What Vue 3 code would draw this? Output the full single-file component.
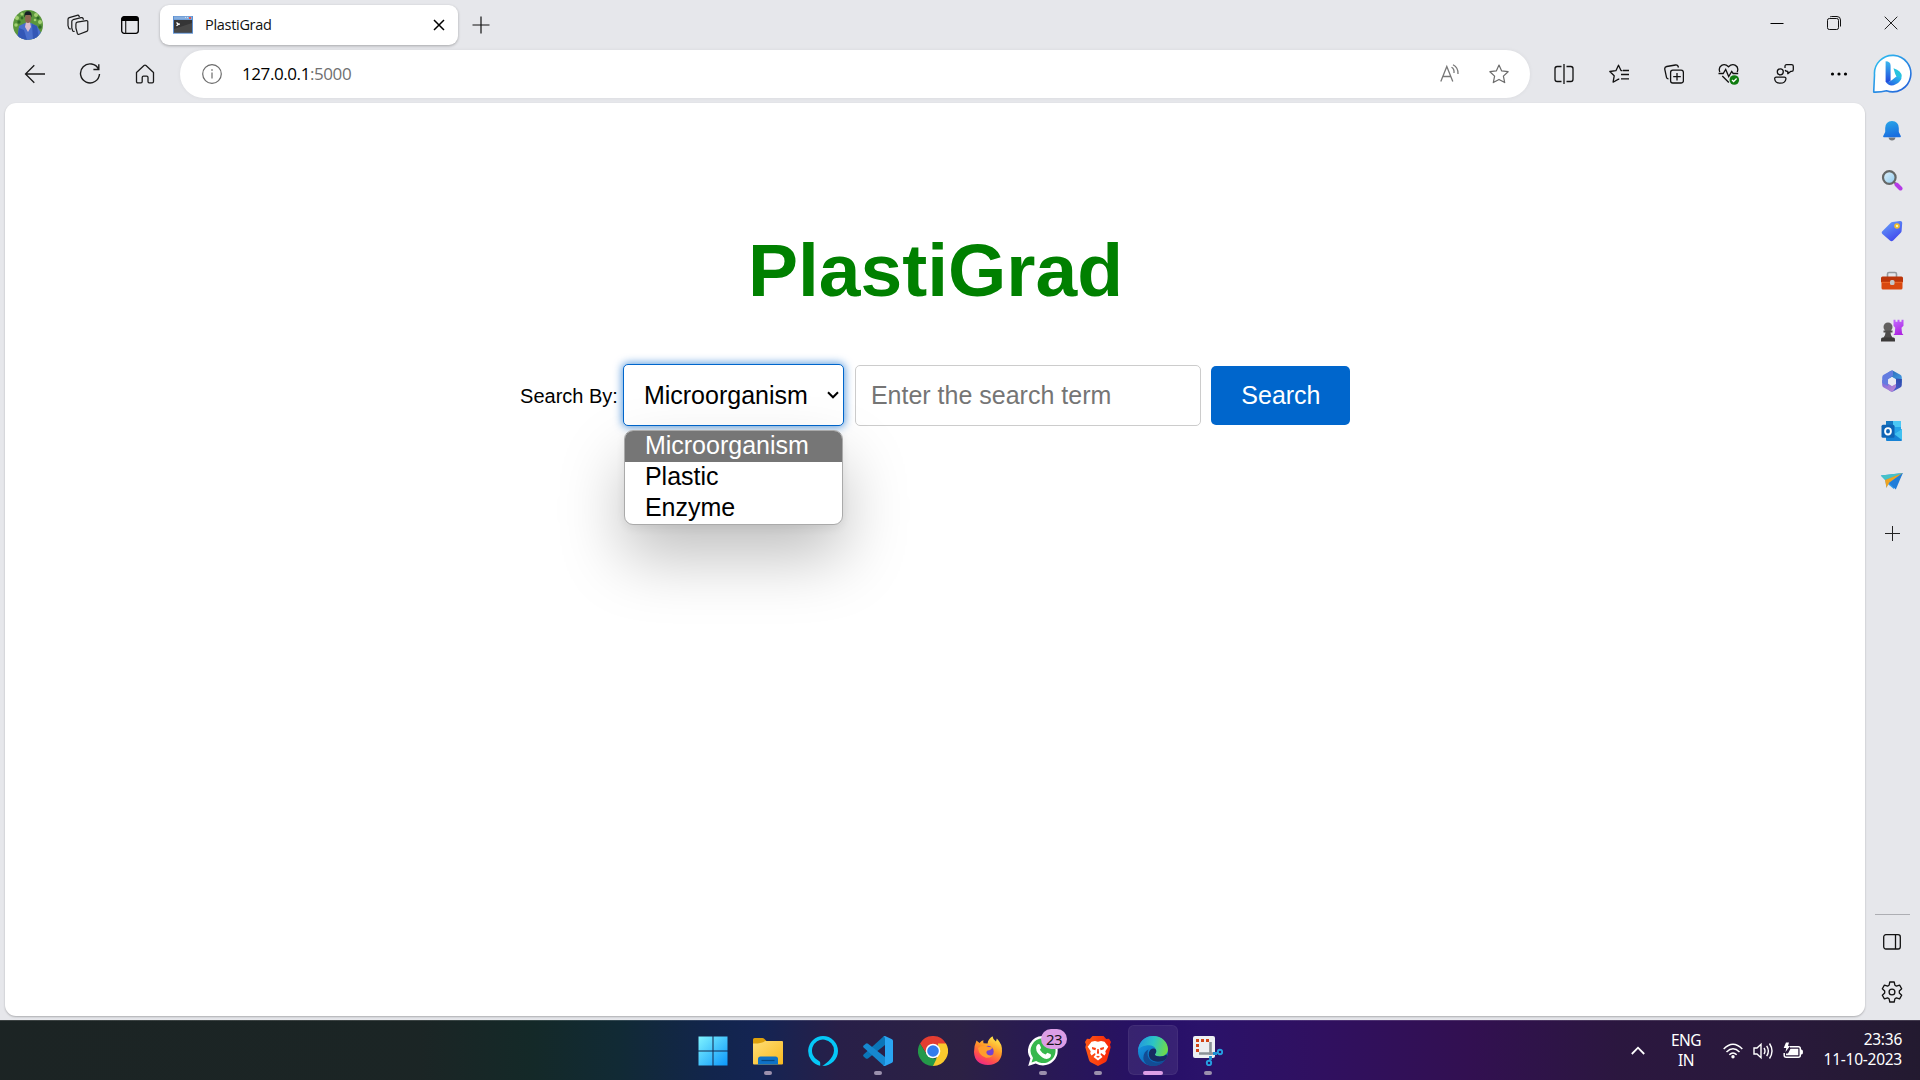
<script setup>
import { ref } from 'vue'

const options = ['Microorganism', 'Plastic', 'Enzyme']
const selected = ref('Microorganism')
const term = ref('')
</script>

<template>
  <div class="desktop">
    <div class="browser">
      <header class="titlebar">
        <svg class="avatar" width="30" height="30" viewBox="0 0 30 30">
          <defs><clipPath id="avatarClip"><circle cx="15" cy="15" r="15" /></clipPath></defs>
          <g clip-path="url(#avatarClip)">
            <rect width="30" height="30" fill="#5a963c" />
            <g fill="#a3d072"><circle cx="4" cy="8" r="2" /><circle cx="9" cy="4" r="1.6" /><circle cx="23" cy="5" r="2" /><circle cx="27" cy="12" r="2" /><circle cx="3" cy="15" r="1.8" /><circle cx="22" cy="10" r="1.3" /></g>
            <g fill="#2f6a26"><circle cx="6" cy="12" r="1.700" /><circle cx="25" cy="8" r="1.5" /><circle cx="9" cy="8" r="1.4" /><circle cx="27" cy="17" r="1.700" /></g>
            <path d="M4 30 6 16l6-3h6l6 3 4 7v7z" fill="#4a70cc" />
            <path d="M6 18l5 2 3 10H4zM19 14l5 2 2 14h-6z" fill="#3357b6" />
            <path d="M13 12h4l1 5-3 5-3-5z" fill="#dcbccd" />
            <ellipse cx="15" cy="8.5" rx="3" ry="4.600" fill="#8d6552" />
            <path d="M11.500 7.500C11 3 12.500 1.300 15 1.300s4.200 1.700 3.500 6.200l-1-2.500h-5z" fill="#171e24" />
          </g>
        </svg>
        <svg class="workspaces" width="22" height="22" viewBox="0 0 22 22" fill="none" stroke="#1b1b1b" stroke-width="1.2" stroke-linejoin="round">
          <path d="M10.300 8.200 19.400 6.700q1.400-.2 1.400 1.100v8q0 1.300-1.100 1.600l-7.500 2.800q-1.400.5-1.800-.7L8.900 14V10q0-1.500 1.400-1.800z" />
          <path d="M7.600 17.400q-1.700.4-2-.8L4.800 14V7.400q0-1.300 1.300-1.700l8-2q1.600-.4 2 .8l.4 1.300" />
          <path d="M3.800 14.900q-1.700.3-2-.8L1 11.600V5.300q0-1.300 1.300-1.700l7.800-2.300q1.600-.4 2 .9l.3 1" />
        </svg>
        <svg class="tab-actions" width="18" height="18" viewBox="0 0 18 18">
          <rect x=".7" y=".7" width="16.600" height="16.600" rx="2.500" fill="none" stroke="#000" stroke-width="1.300" />
          <path d="M.5 5V3Q.5.5 3 .5h12Q17.500.5 17.500 3v2z" />
          <path d="M4.700 5v12.500" stroke="#222" stroke-width="1.200" />
        </svg>
        <div class="tab">
          <svg width="20" height="18" viewBox="0 0 20 18">
            <rect width="20" height="17.700" fill="#5d90d2" /><rect x="1" y=".5" width="18" height="3" fill="#86aede" />
            <path d="M16 1h2v2h-2z" fill="#e0574b" /><path d="M12 1.400h1M14 1.400h1" stroke="#d5e4f6" />
            <rect x="1" y="4" width="18" height="12.500" fill="#353536" /><path d="M1 16.500V13L19 7v9.500z" fill="#484848" />
            <path d="m3.500 6.500 2 1.700-2 1.600M5.700 8.200h1.300" fill="none" stroke="#fff" stroke-width="1.300" />
          </svg>
          <span class="tab-title">PlastiGrad</span>
          <svg width="12" height="12" viewBox="0 0 12 12" stroke="#000" stroke-width="1.500"><path d="m1 1 10 10M11 1 1 11" /></svg>
        </div>
        <svg class="new-tab" width="18" height="18" viewBox="0 0 18 18" stroke="#111" stroke-width="1.200"><path d="M9 .5v17M.5 9h17" /></svg>
        <div class="window-controls">
          <span><svg width="14" height="14" viewBox="0 0 14 14"><path d="M.5 7.500h13" stroke="#000" /></svg></span>
          <span><svg width="14" height="14" viewBox="0 0 14 14" fill="none" stroke="#111"><rect x=".5" y="2.500" width="11" height="11" rx="1.800" /><path d="M3 1Q3.500.5 4.500.5H10Q13.500.5 13.500 4v6.500" /></svg></span>
          <span><svg width="14" height="14" viewBox="0 0 14 14" stroke="#222"><path d="m.7.700 12.600 12.600M13.300.7.700 13.300" /></svg></span>
        </div>
      </header>

      <nav class="toolbar">
        <span class="tool"><svg width="22" height="20" viewBox="0 0 22 20" fill="none" stroke="#1b1b1b" stroke-width="1.300"><path d="M10.300 1.200 1.500 10l8.800 8.800M1.500 10H21" /></svg></span>
        <span class="tool"><svg width="22" height="22" viewBox="0 0 22 22" fill="none" stroke="#1b1b1b" stroke-width="1.400"><path d="M19.600 6.300A9.500 9.500 0 1 0 20.500 11M19.800 1.200v5.300h-5.400" /></svg></span>
        <span class="tool"><svg width="20" height="20" viewBox="0 0 20 20" fill="none" stroke="#1b1b1b" stroke-width="1.300" stroke-linejoin="round"><path d="M1.500 8.500 9 1.600q1-.9 2 0l7.500 6.900v9q0 1.300-1.300 1.300h-3q-1.200 0-1.200-1.300v-4q0-1.300-1.300-1.300H8.500q-1.300 0-1.300 1.300v4q0 1.300-1.200 1.300H2.800q-1.300 0-1.300-1.300z" /></svg></span>
        <div class="address">
          <svg width="20" height="20" viewBox="0 0 20 20" fill="none" stroke="#6b6b6b" stroke-width="1.200"><circle cx="10" cy="10" r="9.300" /><path d="M10 8.500v6" /><path d="M10 5.200v1.500" stroke-width="1.400" /></svg>
          <span class="url">127.0.0.1<span>:5000</span></span>
          <svg class="read" width="20" height="20" viewBox="0 0 20 20" fill="none" stroke="#777" stroke-width="1.300"><path d="M.8 17.500 6.800 2.500l6 15M3 12.500h7.700M11.500 3.300q3 1.700 2.500 5.700M13 .8q5.500 3 5 9.200" /></svg>
          <svg class="fav" width="20" height="20" viewBox="0 0 20 20" fill="none" stroke="#6b6b6b" stroke-width="1.200" stroke-linejoin="round"><path d="m10 1 2.700 5.900 6.400.8-4.700 4.400 1.300 6.500L10 15.400l-5.700 3.200 1.300-6.500L.9 7.700l6.400-.8z" /></svg>
        </div>
        <span class="tool"><svg width="20" height="20" viewBox="0 0 20 20" fill="none" stroke="#111" stroke-width="1.300"><path d="M7.500 2.500H3.200Q1 2.500 1 4.700v10.600q0 2.200 2.200 2.200h4.300M12.500 2.500h4.300Q19 2.500 19 4.700v10.600q0 2.200-2.200 2.200h-4.300M10 0v20" /></svg></span>
        <span class="tool"><svg width="20" height="20" viewBox="0 0 20 20" fill="none" stroke="#111" stroke-width="1.300" stroke-linejoin="round"><path d="m13.500 6.700-1.500-.2L9.500 1.200 6.900 6.700.8 7.500l4.400 4.300-1.100 6.400 5.400-3.100.8.300M14 6.500h6M12 10.500h8M12 14.800h8" /></svg></span>
        <span class="tool"><svg width="20" height="20" viewBox="0 0 20 20" fill="none" stroke="#111" stroke-width="1.300"><rect x="6.600" y="6.200" width="12.800" height="12.800" rx="2.200" /><path d="M13 9v7.500M9.200 12.700h7.600M14.500 3.500q-.6-2.800-3-2.500l-8.800 1.500Q.4 3 .8 5.300l1.700 8q.4 1.500 2 1.500" /></svg></span>
        <span class="tool"><svg width="22" height="22" viewBox="0 0 22 22" fill="none" stroke="#111" stroke-width="1.300"><path d="M1.800 9C-.4 2.700 6-.7 10.500 3.800 15-.7 21.600 2.700 19.200 9M.5 10.500h4.700l2.500-4 3 7 3-5 1.500 2h5M4.300 13l6.500 6.500" /><circle cx="16.300" cy="17" r="4.800" fill="#107c10" stroke="none" /><path d="m14 17 1.600 1.500 3-3" stroke="#fff" /></svg></span>
        <span class="tool"><svg width="20" height="20" viewBox="0 0 20 20" fill="none" stroke="#111" stroke-width="1.300" stroke-linejoin="round"><circle cx="6.300" cy="7.800" r="3" /><path d="M2.300 13.200h8q1.800 0 1.600 1.800-.5 4.200-5.600 4.200T.7 15q-.2-1.800 1.600-1.800zM11 4V2.300Q11 .7 12.600.7h5Q19.300.7 19.300 2.300v3.500q0 1.600-1.700 1.600h-1l-2.800 2.300V7.400q-2.300 0-2.600-1.400" /></svg></span>
        <span class="tool"><svg width="18" height="4" viewBox="0 0 18 4"><circle cx="2.500" cy="2" r="1.600" /><circle cx="9" cy="2" r="1.600" /><circle cx="15.500" cy="2" r="1.600" /></svg></span>
        <svg class="bing" width="40" height="40" viewBox="0 0 40 40">
          <defs>
            <linearGradient id="ring" x1="0" y1="0" x2="1" y2="1"><stop stop-color="#2ec5f2" /><stop offset="1" stop-color="#255bd8" /></linearGradient>
            <linearGradient id="bStem" x1="0" y1="0" x2="0" y2="1"><stop stop-color="#3ab9ef" /><stop offset="1" stop-color="#2149dc" /></linearGradient>
            <linearGradient id="bBowl" x1="0" y1="1" x2="1" y2="0"><stop stop-color="#2351e2" /><stop offset="1" stop-color="#2cc8ee" /></linearGradient>
          </defs>
          <path d="M1.700 38.100 2.500 21A18.200 18.200 0 1 1 14.500 36.700Q9 38.300 1.700 38.100z" fill="#fff" stroke="url(#ring)" stroke-width="1.600" stroke-linejoin="round" />
          <path d="M21.500 14.200q8 2.500 8.300 8-1.500 3-3.500 1.500-2.400-1-3.200-4z" fill="#28c3de" />
          <path d="M13.500 27.500q4 1 6.500-1.500l5-4q3 0 4.700 1.500-.8 4.200-6 6.800-6 3.500-10.200-2.800z" fill="url(#bBowl)" />
          <path d="M13.600 7.200q5 0 5 4.500v14.500q-2 3-5 1.500z" fill="url(#bStem)" />
        </svg>
      </nav>

      <div class="body">
        <main class="page">
          <h1>PlastiGrad</h1>
          <form class="search" @submit.prevent>
            <label>Search By:</label>
            <div class="select">
              <span>{{ selected }}</span>
              <svg width="12" height="8" viewBox="0 0 12 8" fill="none" stroke="#000" stroke-width="2"><path d="m1 1.300 5 5 5-5" /></svg>
              <ul class="menu">
                <li v-for="o in options" :key="o" :class="{ active: o === selected }" @click="selected = o">{{ o }}</li>
              </ul>
            </div>
            <input v-model="term" type="text" placeholder="Enter the search term" />
            <button type="submit">Search</button>
          </form>
        </main>

        <aside class="sidebar">
          <span class="side"><svg width="20" height="22" viewBox="0 0 20 22">
            <defs><linearGradient id="bell" x2=".3" y2="1"><stop stop-color="#2aa9e8" /><stop offset="1" stop-color="#1a6fe0" /></linearGradient></defs>
            <path d="M6.500 17.500h7q-.5 3-3.500 3t-3.500-3z" fill="#77787c" /><path d="M10 1q6.600.3 6.800 7v4l2 4q.4 1.200-.8 1.200H2q-1.200 0-.8-1.200l2-4V8Q3.400 1.300 10 1z" fill="url(#bell)" /></svg></span>
          <span class="side"><svg width="22" height="22" viewBox="0 0 22 22">
            <defs><linearGradient id="lens" x2="1" y2="1"><stop stop-color="#e2f3fb" /><stop offset="1" stop-color="#8cc9ee" /></linearGradient></defs>
            <path d="m13 12 3 3" stroke="#777" stroke-width="2" /><path d="m15.500 14.500 4 4" stroke="#b53be6" stroke-width="4" stroke-linecap="round" /><circle cx="8.300" cy="7.500" r="6.300" fill="url(#lens)" stroke="#656867" stroke-width="2.200" /></svg></span>
          <span class="side"><svg width="22" height="22" viewBox="0 0 22 22">
            <defs><linearGradient id="tag" x1="0" y1="0" x2=".6" y2="1"><stop stop-color="#69a6fa" /><stop offset="1" stop-color="#4149ed" /></linearGradient></defs>
            <path d="M11.500 2 19 .9q2.300-.2 2.200 2L20.600 11q-.1 1-.8 1.700l-7.600 7.700q-1.700 1.500-3.300 0L1.400 14q-1.500-1.500.2-3l8.200-8.200q.7-.7 1.700-.8z" fill="url(#tag)" /><circle cx="16" cy="6" r="2" fill="#fff6b0" stroke="#f3bd25" stroke-width="1.600" /></svg></span>
          <span class="side"><svg width="24" height="20" viewBox="0 0 24 20">
            <path d="M7.500 6V3Q7.500 1.500 9 1.500h6q1.500 0 1.500 1.500v3" fill="none" stroke="#95999d" stroke-width="1.600" /><rect x="1.500" y="9" width="21" height="9.500" rx="1.500" fill="#d9480f" /><path d="M2.500 5.500h19q1.500 0 1.500 1.500v4H1V7q0-1.500 1.500-1.500z" fill="#bb3509" /><path d="M1.500 11.300h21" stroke="#ef6b2a" /><rect x="10" y="9" width="4.500" height="5" rx="1.500" fill="#c4c8ca" /></svg></span>
          <span class="side"><svg width="24" height="24" viewBox="0 0 24 24">
            <defs><linearGradient id="rook" x2=".3" y2="1"><stop stop-color="#c36cff" /><stop offset="1" stop-color="#ae27e2" /></linearGradient></defs>
            <path d="M13.500.8h2v2h2v-2h2v2h2v-2h2v6l-2 2 .5 5.500 1.500 1.700h-10l1.300-1.700.4-5.500-1.700-2z" fill="url(#rook)" /><circle cx="8" cy="8" r="4.500" fill="#62605f" /><path d="M3.500 11.500h9v2h-2q0 3 2.200 5.500H3.300q2.200-2.500 2.200-5.500h-2z" fill="#4e4c4b" /><path d="M2.500 18.500h11q1.500 0 1.500 2v2H1v-2q0-2 1.500-2z" fill="#3b3938" /></svg></span>
          <span class="side"><svg width="22" height="22" viewBox="0 0 22 22">
            <defs>
              <linearGradient id="mA" x2="1" y2="1"><stop stop-color="#2460ae" /><stop offset="1" stop-color="#49a5ec" /></linearGradient>
              <linearGradient id="mB" x1="1" y1="0" x2="0" y2="1"><stop stop-color="#2949a8" /><stop offset="1" stop-color="#5865dc" /></linearGradient>
              <linearGradient id="mC" x2="1" y2="1"><stop stop-color="#7466dc" /><stop offset="1" stop-color="#c38ad4" /></linearGradient>
            </defs>
            <path d="M9.500.9q1.500-.8 3 0l6.800 3.900q1.500.9 1.500 2.600V13L15 9.500 11 7l-4 2.500L5.500 12V4z" fill="url(#mA)" />
            <path d="M20.800 9v6q0 1.700-1.500 2.600l-6.800 3.700q-1.500.8-3 0L7 19.500l8-5v-6z" fill="url(#mB)" />
            <path d="M1.200 10v5q0 1.700 1.500 2.600l6.800 3.700q1.500.8 2.700-.3L15 17v-3l-4 2-4-2.500V11z" fill="url(#mC)" />
            <path d="M9.500.9 2.700 4.800Q1.200 5.700 1.200 7.400V13L7 16V9.500L12 5.500V.6z" fill="#637ce0" />
            <path d="m11 7 3.800 2.200v4.300L11 15.700l-3.800-2.200V9.200z" fill="#e9eaf3" /></svg></span>
          <span class="side"><svg width="22" height="22" viewBox="0 0 22 22">
            <rect x="5" y="1" width="15" height="14" rx="1" fill="#27a4e8" /><path d="M5 1h7v7H5z" fill="#1678c2" /><path d="M12 1h8v6h-8z" fill="#4cc8f5" /><path d="M5 20V9l8 5 8-5v11q0 1-1 1H6q-1 0-1-1z" fill="#1682d5" /><path d="m21 9-8 5 8 6z" fill="#40c0f0" /><rect x=".5" y="4.800" width="13" height="13" rx="1.500" fill="#0f64b5" /><ellipse cx="7" cy="11.300" rx="2.900" ry="3.200" fill="none" stroke="#fff" stroke-width="1.900" /></svg></span>
          <span class="side"><svg width="24" height="20" viewBox="0 0 24 20">
            <path d="M.8 4.500 22.800 2l-9 16-6-5-1.300 4-1.200-8z" fill="#3199ea" /><path d="M.8 4.500 22.800 2 5 9z" fill="#45c2c8" /><path d="M5 9 22.800 2 9 12l-2.500 4.800z" fill="#eda322" /><path d="M9 12 22.800 2l-7 16.500z" fill="#207dd9" /></svg></span>
          <span class="side add"><svg width="15" height="15" viewBox="0 0 15 15" stroke="#222" stroke-width="1"><path d="M7.500 0v15M0 7.500h15" /></svg></span>
          <div class="side-bottom">
            <hr />
            <span class="side"><svg width="18" height="16" viewBox="0 0 18 16" fill="none" stroke="#111" stroke-width="1.300"><rect x=".7" y=".7" width="16.600" height="14.300" rx="2.200" /><path d="M12.500 1v14" /></svg></span>
            <span class="side"><svg width="22" height="22" viewBox="0 0 22 22" fill="none" stroke="#111" stroke-width="1.300" stroke-linejoin="round"><path d="M8.800 1h4.400l.7 3.200 1.500.9 3.200-1 2.100 3.700L18.300 10v2l2.400 2.200-2.100 3.700-3.200-1-1.500.9-.7 3.200H8.800l-.7-3.200-1.500-.9-3.200 1-2.100-3.700L3.700 12v-2L1.300 7.800l2.100-3.700 3.200 1 1.500-.9z" /><circle cx="11" cy="11" r="2.900" /></svg></span>
          </div>
        </aside>
      </div>
    </div>

    <footer class="taskbar">
      <div class="apps">
        <span class="app"><svg width="30" height="30" viewBox="0 0 30 30">
          <defs><linearGradient id="win" gradientUnits="userSpaceOnUse" x1="0" y1="0" x2="30" y2="30"><stop stop-color="#81f5ff" /><stop offset="1" stop-color="#0a95fa" /></linearGradient></defs>
          <path d="M.5.500h14v14H.5zM15.500.500h14v14h-14zM.5 15.500h14v14H.5zM15.500 15.500h14v14h-14z" fill="url(#win)" /></svg></span>
        <span class="app"><svg width="30" height="30" viewBox="0 0 30 30">
          <defs><linearGradient id="folder" x2="1" y2="1"><stop stop-color="#ffde76" /><stop offset="1" stop-color="#f8b91f" /></linearGradient></defs>
          <path d="M0 8V3.500Q0 2 1.500 2h8q1 0 1.700.8L13.500 5v5H0z" fill="#dda00c" /><path d="M0 7.500q9 .3 12-2.500h17q1 0 1 1v21.500q0 1-1 1H1q-1 0-1-1z" fill="url(#folder)" /><path d="M5 28.500V23q0-2.500 2.500-2.500h15Q25 20.500 25 23v5.500z" fill="#0f72c6" /><path d="M8.500 24.500h13" stroke="#074982" stroke-width="1.200" /></svg><i class="dot" /></span>
        <span class="app"><svg width="30" height="30" viewBox="0 0 30 30"><path d="M15 0a15 15 0 0 0-2.800 29.700V27c0-1.300-.8-1.800-2-2.500A11 11 0 1 1 26 14.500C25.800 22.800 16 29 14.200 30 22.800 30.200 30 23.300 30 15A15 15 0 0 0 15 0z" fill="#05c8f8" /></svg></span>
        <span class="app"><svg width="30" height="30" viewBox="0 0 30 30"><path d="M22 0v9L5 22.400q-1.200.8-2.200 0L.6 20.500q-1-1 0-2L20.500.600z" fill="#0b76b8" /><path d="M22 30v-9L5 7.700q-1.200-.8-2.200 0L.6 9.500q-1 1 0 2l19.900 17.900z" fill="#1688d0" /><path d="M22 0 29 3.300q1 .5 1 1.700v20q0 1.200-1 1.700L22 30q-1 .2-2-.8 2 .6 2-1.800V2.500q0-2.300-2-1.700z" fill="#2aa5f2" /></svg><i class="dot" /></span>
        <span class="app"><svg width="30" height="30" viewBox="0 0 30 30"><path d="M2 7.500A15 15 0 0 1 28 7.500L27 9H15L8.500 18z" fill="#e43d31" /><path d="M28 7.500A15 15 0 0 1 15 30l-.7-1 6-10.500L20 7.500z" fill="#fac92d" /><path d="M2 7.500 8.800 18.600 15 22.500h3.700L15 30A15 15 0 0 1 2 7.500z" fill="#249949" /><circle cx="15" cy="15" r="7.300" fill="#fff" /><circle cx="15" cy="15" r="5.800" fill="#317bed" /></svg></span>
        <span class="app"><svg width="30" height="30" viewBox="0 0 30 30">
          <defs><linearGradient id="fox" x1=".8" y1="0" x2=".3" y2="1"><stop stop-color="#fff04e" /><stop offset=".45" stop-color="#ff9827" /><stop offset=".75" stop-color="#ff504c" /><stop offset="1" stop-color="#ee2787" /></linearGradient></defs>
          <path d="M3.500 4.500 6.500 7q2-2.500 4-2.700-.6 1.700.1 3l4 .3Q15 3 19.500.3q.3 3.200 3.500 5.200l.8-3Q29.500 8 29 15.500 28.500 28.500 15 29 1.500 28.500 1 16q.2-7 2.500-11.500z" fill="url(#fox)" /><circle cx="15" cy="15.500" r="5.700" fill="#7443d0" /><path d="M5 12q5-4 10.500-1l4 .2q-1 3-5 3.200-2.500 2 .5 4.600 3 1 5-.5-2 4-7 3.200Q6 20 5 12z" fill="#ff9d2d" /></svg></span>
        <span class="app"><svg width="30" height="30" viewBox="0 0 30 30">
          <path d="M15 0a14.700 14.700 0 0 1 0 29.400q-4 0-7.300-1.900L.2 30l2.200-7.400A14.700 14.700 0 0 1 15 0z" fill="#fff" /><path d="M15.200 2.300a12.400 12.400 0 1 1-7.100 22.600L3.500 26.400 5 22A12.400 12.400 0 0 1 15.200 2.300z" fill="#37b84d" /><path d="M9.500 8.500q1.500-1.300 2.300.3l1.200 2.700q.2.700-1.200 2.300 2 3.400 5.700 4.800l1.900-1.800q3.800 1.300 3.600 2.300-.2 3.800-4.500 3.800Q14 22.500 9.700 17 6.500 12 9.500 8.500z" fill="#fff" /></svg><b class="badge">23</b><i class="dot" /></span>
        <span class="app"><svg width="30" height="30" viewBox="0 0 30 30">
          <defs><linearGradient id="brave" x2="1"><stop stop-color="#ff5a16" /><stop offset="1" stop-color="#f72408" /></linearGradient></defs>
          <path d="M9.500 0h11l2.700 3 2.800-.3 2 3.300-1 2.500.7 2.700-3.600 12.500q-.5 1.500-1.800 2.500L15 30l-7.300-3.800q-1.300-1-1.800-2.500L2.300 11.200 3 8.500 2 6l2-3.300L6.800 3z" fill="url(#brave)" /><path d="m15 5.800 3-.8 3.500.7 3.800 5-3 4.500.5 2-1.300 2.300-3.500-2.500-.5 1.500L19.500 21 15 24.500 10.500 21l2-2.500L12 17l-3.500 2.500-1.300-2.300.5-2-3-4.500 3.800-5L12 5z" fill="#fff" /><path d="m9 11 4 .9-.6 2.300-3.200-1zM21 11l-4 .9.600 2.300 3.200-1zM14.300 13h1.400l.4 4.200L15 18l-1.100-.8zM13 20.800l2-1 2 1-2 1z" fill="#fb3e12" /></svg><i class="dot" /></span>
        <span class="app current"><svg width="30" height="30" viewBox="0 0 30 30">
          <defs><linearGradient id="edgeTop" x1="0" y1=".3" x2="1" y2=".5"><stop stop-color="#2396df" /><stop offset=".5" stop-color="#2cc5c5" /><stop offset="1" stop-color="#70db47" /></linearGradient><linearGradient id="edgeLow" x1="0" y1="0" x2=".7" y2="1"><stop stop-color="#1aa2e8" /><stop offset="1" stop-color="#0860b2" /></linearGradient></defs>
          <circle cx="15" cy="15" r="15" fill="url(#edgeLow)" /><path d="M.2 14C1 5.500 7.300 0 15 0c9 0 15 6.300 15 13.300 0 5-4 7.200-8 7.200-3.800 0-5.500-1.300-5-2.300 3-3 .6-8.700-6-8.900C5.500 9.300 1.500 11.500.2 14z" fill="url(#edgeTop)" /><path d="M10.500 13.500C7 21 13.500 27.500 21 26.500c3-.5 5.500-2.500 7-4C23 32 8 33 5.500 23.500 4.800 18.500 7 15 10.500 13.500z" fill="#134c94" /><path d="M17 18.200c-.5 1 1.200 2.300 5 2.300 3 0 5-1 6-2 2 1.500 1 4-2 6-8.500 3.500-16.500-.5-15-8 .8-3.200 2.500-4.200 5-4 2.700.5 3 3.500 1 5.700z" fill="#172c62" /></svg><i class="dot" /></span>
        <span class="app"><svg width="30" height="30" viewBox="0 0 30 30">
          <rect width="22" height="22" rx="2" fill="#edf0f2" /><path d="M3 4.500h3M8 4.500h3M13 4.500h3M4.500 8v3M4.500 13v3" stroke="#d24516" stroke-width="3" /><path d="M17.500 6v13M6 17.500h15" stroke="#8a9297" stroke-width="2.600" /><path d="M20 17.500h4M17.500 20v4" stroke="#1c91d4" stroke-width="2.800" /><g fill="none" stroke="#25a0e2" stroke-width="1.900"><circle cx="27" cy="16" r="2.200" /><circle cx="16" cy="27" r="2.200" /></g></svg><i class="dot" /></span>
      </div>
      <div class="tray">
        <svg class="chevron" width="14" height="9" viewBox="0 0 14 9" fill="none" stroke="#fff" stroke-width="1.800"><path d="m.8 8 6.200-6.300L13.200 8" /></svg>
        <div class="lang">ENG<br />IN</div>
        <svg width="20" height="16" viewBox="0 0 20 16" fill="none" stroke="#fff" stroke-width="1.500"><path d="M.7 6q9.300-9.500 18.600 0M3.500 9q6.500-6.500 13 0M6.300 11.800q3.700-3.600 7.400 0" /><circle cx="10" cy="13.700" r="1.700" fill="#fff" stroke="none" /></svg>
        <svg width="20" height="18" viewBox="0 0 20 18" fill="none" stroke="#fff" stroke-width="1.400"><path d="M1 6v6h3l4 3.700V2.300L4 6zM11 6q2 3 0 6M13.700 3.800q3.300 5.200 0 10.400M16.500 1.500q5 7.500 0 15" /></svg>
        <svg width="20" height="18" viewBox="0 0 20 18"><path d="M7 4.800h8.300q2 0 2 2v6.500q0 2-2 2H3.200q-2 0-2-2V11" fill="none" stroke="#fff" stroke-width="1.500" /><path d="M7.500 6.800h7.800v6.500H3V11.500h2z" fill="#fff" /><path d="M17.500 7.500h1q1.500 0 1.500 2.500t-1.500 2.500h-1z" fill="#fff" /><path d="M3 .5h3L5 4h2l-4.500 6 .8-4H.7z" fill="#fff" /></svg>
        <div class="clock"><span>23:36</span><span>11-10-2023</span></div>
      </div>
    </footer>
  </div>
</template>

<style>
body { margin: 0; overflow: hidden; }
</style>

<style scoped>
* { box-sizing: border-box; }
svg { display: block; flex: none; }
.desktop { width: 1920px; height: 1080px; display: flex; flex-direction: column; font-family: "Noto Sans", "Open Sans", sans-serif; }
.browser { height: 1020px; display: flex; flex-direction: column; background: #e6e7eb; }

.titlebar { height: 50px; display: flex; align-items: center; padding-left: 13px; flex: none; }
.workspaces { margin-left: 24px; }
.tab-actions { margin-left: 32px; }
.tab { display: flex; align-items: center; width: 298px; height: 40px; margin-left: 21px; padding: 0 13px; border-radius: 9px; background: #fff; box-shadow: 0 1px 3px rgba(0, 0, 0, .28); }
.tab-title { flex: 1; margin-left: 12px; padding-bottom: 2px; font-family: "Open Sans", sans-serif; font-size: 14.5px; letter-spacing: -.3px; color: #111; }
.new-tab { margin-left: 13.500px; }
.window-controls { display: flex; align-self: flex-start; height: 45px; margin-left: auto; }
.window-controls span { display: grid; place-items: center; width: 57.300px; }

.toolbar { display: flex; align-items: center; height: 48px; padding-left: 7px; flex: none; }
.tool { display: grid; place-items: center; width: 55px; height: 48px; flex: none; }
.address { display: flex; align-items: center; width: 1350px; height: 48px; margin: 0 6.500px 0 8px; padding: 0 21px 0 22px; border-radius: 24px; background: #fff; box-shadow: 0 0 4px rgba(0, 0, 0, .06); flex: none; }
.url { margin-left: 20px; padding-bottom: 2px; flex: 1; font-family: "Open Sans", sans-serif; font-size: 17px; letter-spacing: -.42px; color: #000; }
.url span { color: #707070; }
.fav { margin-left: 29px; }
.bing { margin-left: 5.500px; }

.body { display: flex; flex: 1; min-height: 0; }
.page { width: 1860px; height: 913px; margin: 5px 0 0 5px; padding-top: 124px; border-radius: 11px; background: #fff; box-shadow: 0 1px 2px rgba(0, 0, 0, .25); font-family: "Liberation Sans", Arial, sans-serif; color: #000; flex: none; }
h1 { margin: 0; padding-left: 1px; text-align: center; font-size: 75px; line-height: 87px; font-weight: bold; color: #008000; }
.search { display: flex; justify-content: center; align-items: center; height: 62px; margin-top: 50px; }
label { font-size: 20px; margin: 3px 5px 0 0; }
.select { position: relative; display: flex; align-items: center; justify-content: space-between; width: 221px; height: 62px; padding: 0 4px 0 20px; border: 1px solid #0066cc; border-radius: 5px; background: #fff; box-shadow: 0 0 9px 1px rgba(0, 102, 204, .65); font-size: 25px; }
.menu { position: absolute; left: 0; top: 65px; width: 219px; height: 95px; margin: 0; padding: 0; list-style: none; overflow: hidden; border: 1px solid #aaa; border-radius: 9px; background: #fff; box-shadow: 0 32px 64px rgba(0, 0, 0, .25), 0 3px 10px rgba(0, 0, 0, .07); }
.menu li { height: 31px; line-height: 29px; padding-left: 20px; }
.menu .active { background: #767676; color: #fff; }
input { width: 346px; height: 61px; margin-left: 11px; padding: 0 14px 0 15px; border: 1px solid #ccc; border-radius: 5px; outline: none; font: 25px "Liberation Sans", Arial, sans-serif; background: transparent; }
input::placeholder { color: #757575; }
button { width: 139px; height: 59px; margin-left: 10px; padding: 0 0 0 1px; border: 0; border-radius: 5px; background: #0066cc; color: #fff; font: 25px "Liberation Sans", Arial, sans-serif; }

.sidebar { display: flex; flex-direction: column; align-items: center; width: 54px; padding-top: 7.500px; }
.side { display: grid; place-items: center; width: 50px; height: 50px; flex: none; }
.add { margin-top: 3px; }
.side-bottom { margin-top: auto; padding-bottom: 3px; display: flex; flex-direction: column; align-items: center; }
hr { width: 35px; height: 1px; margin: 0 0 2px; border: 0; background: #adaeb3; }

.taskbar { display: flex; height: 60px; padding-left: 685px; background: linear-gradient(90deg, #1c2424 0, #1b2525 420px, #142928 530px, #112a35 620px, #12254c 710px, #142453 760px, #281f48 840px, #2c2144 960px, #291b50 1020px, #270f68 1160px, #2a126a 1200px, #301060 1320px, #321051 1470px, #2b173f 1620px, #29193b 1780px, #231a30 1920px); border-top: 1px solid rgba(255, 255, 255, .14); }
.apps { display: flex; }
.app { position: relative; display: grid; place-items: center; width: 55px; height: 59px; }
.dot { position: absolute; left: 24px; bottom: 5px; width: 8px; height: 4px; border-radius: 2px; background: #9b90ad; }
.current::before { content: ""; position: absolute; inset: 4px 2.500px 5px; border-radius: 6px; background: rgba(255, 255, 255, .08); border: 1px solid rgba(255, 255, 255, .05); }
.current svg { position: relative; }
.current .dot { left: 18px; width: 20px; background: #dc9ee6; }
.badge { position: absolute; left: 26px; top: 8px; width: 26px; height: 20px; border-radius: 10px; background: #dc9ee6; color: #16121a; font-size: 15px; font-weight: 400; line-height: 20px; letter-spacing: -.6px; text-align: center; }
.tray { display: flex; align-items: center; margin-left: auto; padding-right: 18px; color: #fff; font-size: 15.500px; line-height: 20px; }
.lang { width: 40px; margin: 0 17px 0 21px; padding-bottom: 2px; text-align: center; letter-spacing: -.6px; }
.tray > svg + svg { margin-left: 10px; }
.clock { display: flex; flex-direction: column; width: 80px; margin-left: 19px; padding-bottom: 3px; text-align: right; letter-spacing: -.25px; white-space: nowrap; }
</style>
